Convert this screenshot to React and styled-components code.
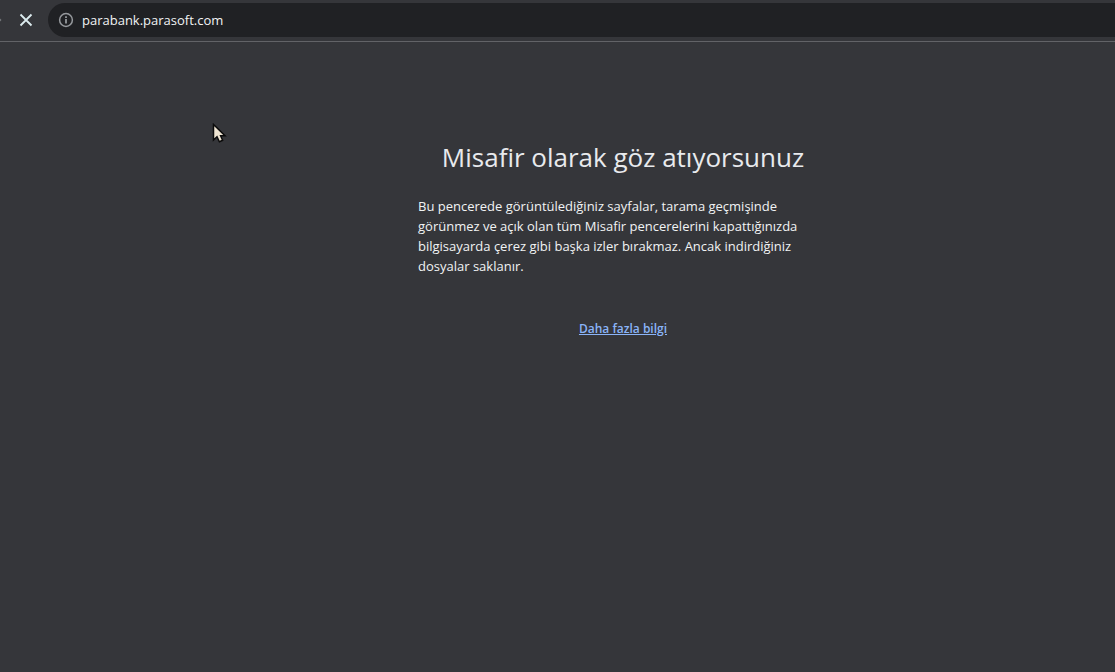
import React from "react";
import styled, { createGlobalStyle } from "styled-components";

const GlobalStyle = createGlobalStyle`
  * { box-sizing: border-box; }
  body {
    margin: 0;
    background: #35363a;
    color: #f1f3f4;
    font-family: "Segoe UI", "Open Sans", "Noto Sans", sans-serif;
  }
`;

const Page = styled.div`
  position: relative;
  min-height: 100vh;
  overflow: hidden;
`;

const Toolbar = styled.header`
  display: flex;
  align-items: center;
  height: 42px;
  padding: 3px 0 4px;
  border-bottom: 1px solid #626367;
`;

const IconButton = styled.button`
  display: flex;
  align-items: center;
  justify-content: ${(p) => p.$align || "center"};
  width: ${(p) => p.$width}px;
  height: 34px;
  padding: 0;
  border: 0;
  background: none;
  color: ${(p) => p.$color};
`;

const AddressBar = styled.form`
  display: flex;
  flex: 1;
  align-items: center;
  gap: 8px;
  height: 34px;
  padding-left: 10px;
  border-radius: 17px 0 0 17px;
  background: #202124;
`;

const AddressInput = styled.input`
  flex: 1;
  min-width: 0;
  height: 34px;
  padding: 0;
  border: 0;
  outline: 0;
  background: none;
  color: #f1f3f4;
  font-family: inherit;
  font-size: 13px;
`;

const Content = styled.main`
  display: flex;
  flex-direction: column;
  align-items: center;
  padding: 95px 0 0 131px;
`;

const Title = styled.h1`
  margin: 0;
  color: #e8eaed;
  font-size: 26px;
  font-weight: 400;
  line-height: 40px;
  white-space: nowrap;
`;

const Description = styled.p`
  width: 410px;
  margin: 19px 0 0;
  font-size: 13px;
  line-height: 20px;
  white-space: nowrap;
`;

const MoreLink = styled.a`
  margin-top: 43px;
  color: #8ab4f8;
  font-size: 12px;
  font-weight: 600;
  line-height: 20px;
`;

const Pointer = styled.svg`
  position: absolute;
  top: 123px;
  left: 212px;
`;

const lines = [
  "Bu pencerede görüntülediğiniz sayfalar, tarama geçmişinde",
  "görünmez ve açık olan tüm Misafir pencerelerini kapattığınızda",
  "bilgisayarda çerez gibi başka izler bırakmaz. Ancak indirdiğiniz",
  "dosyalar saklanır.",
];

export default function App() {
  return (
    <Page>
      <GlobalStyle />
      <Toolbar>
        <IconButton $width={4} $align="flex-start" $color="#77797d" aria-label="İleri">
          <svg width="2" height="4" viewBox="0 0 2 4">
            <path d="M0 0.5L1.5 2L0 3.5Z" fill="currentColor" />
          </svg>
        </IconButton>
        <IconButton $width={44} $color="#dcecef" aria-label="Durdur">
          <svg width="14" height="14" viewBox="0 0 14 14">
            <path d="M1.5 1.5L12.5 12.5M12.5 1.5L1.5 12.5" stroke="currentColor" strokeWidth="1.8" />
          </svg>
        </IconButton>
        <AddressBar onSubmit={(e) => e.preventDefault()}>
          <svg width="16" height="16" viewBox="0 0 16 16" fill="none" stroke="#96999d">
            <circle cx="8" cy="8" r="6.4" strokeWidth="1.5" />
            <path d="M8 7V11.5M8 4.3V6" strokeWidth="1.8" />
          </svg>
          <AddressInput aria-label="Adres çubuğu" defaultValue="parabank.parasoft.com" spellCheck={false} />
        </AddressBar>
      </Toolbar>
      <Content>
        <Title>Misafir olarak göz atıyorsunuz</Title>
        <Description>
          {lines.map((line, i) => (
            <React.Fragment key={line}>
              {i > 0 && <br />}
              {line}
            </React.Fragment>
          ))}
        </Description>
        <MoreLink href="#">Daha fazla bilgi</MoreLink>
      </Content>
      <Pointer width="15" height="21" viewBox="0 0 15 21" aria-hidden="true">
        <path
          d="M1.5 1.5V17L5 13.8L7.4 18.8L10.6 17.3L8.6 12.8H13Z"
          fill="#eee4d2"
          stroke="#0b0b0b"
          strokeWidth="1.5"
        />
      </Pointer>
    </Page>
  );
}
